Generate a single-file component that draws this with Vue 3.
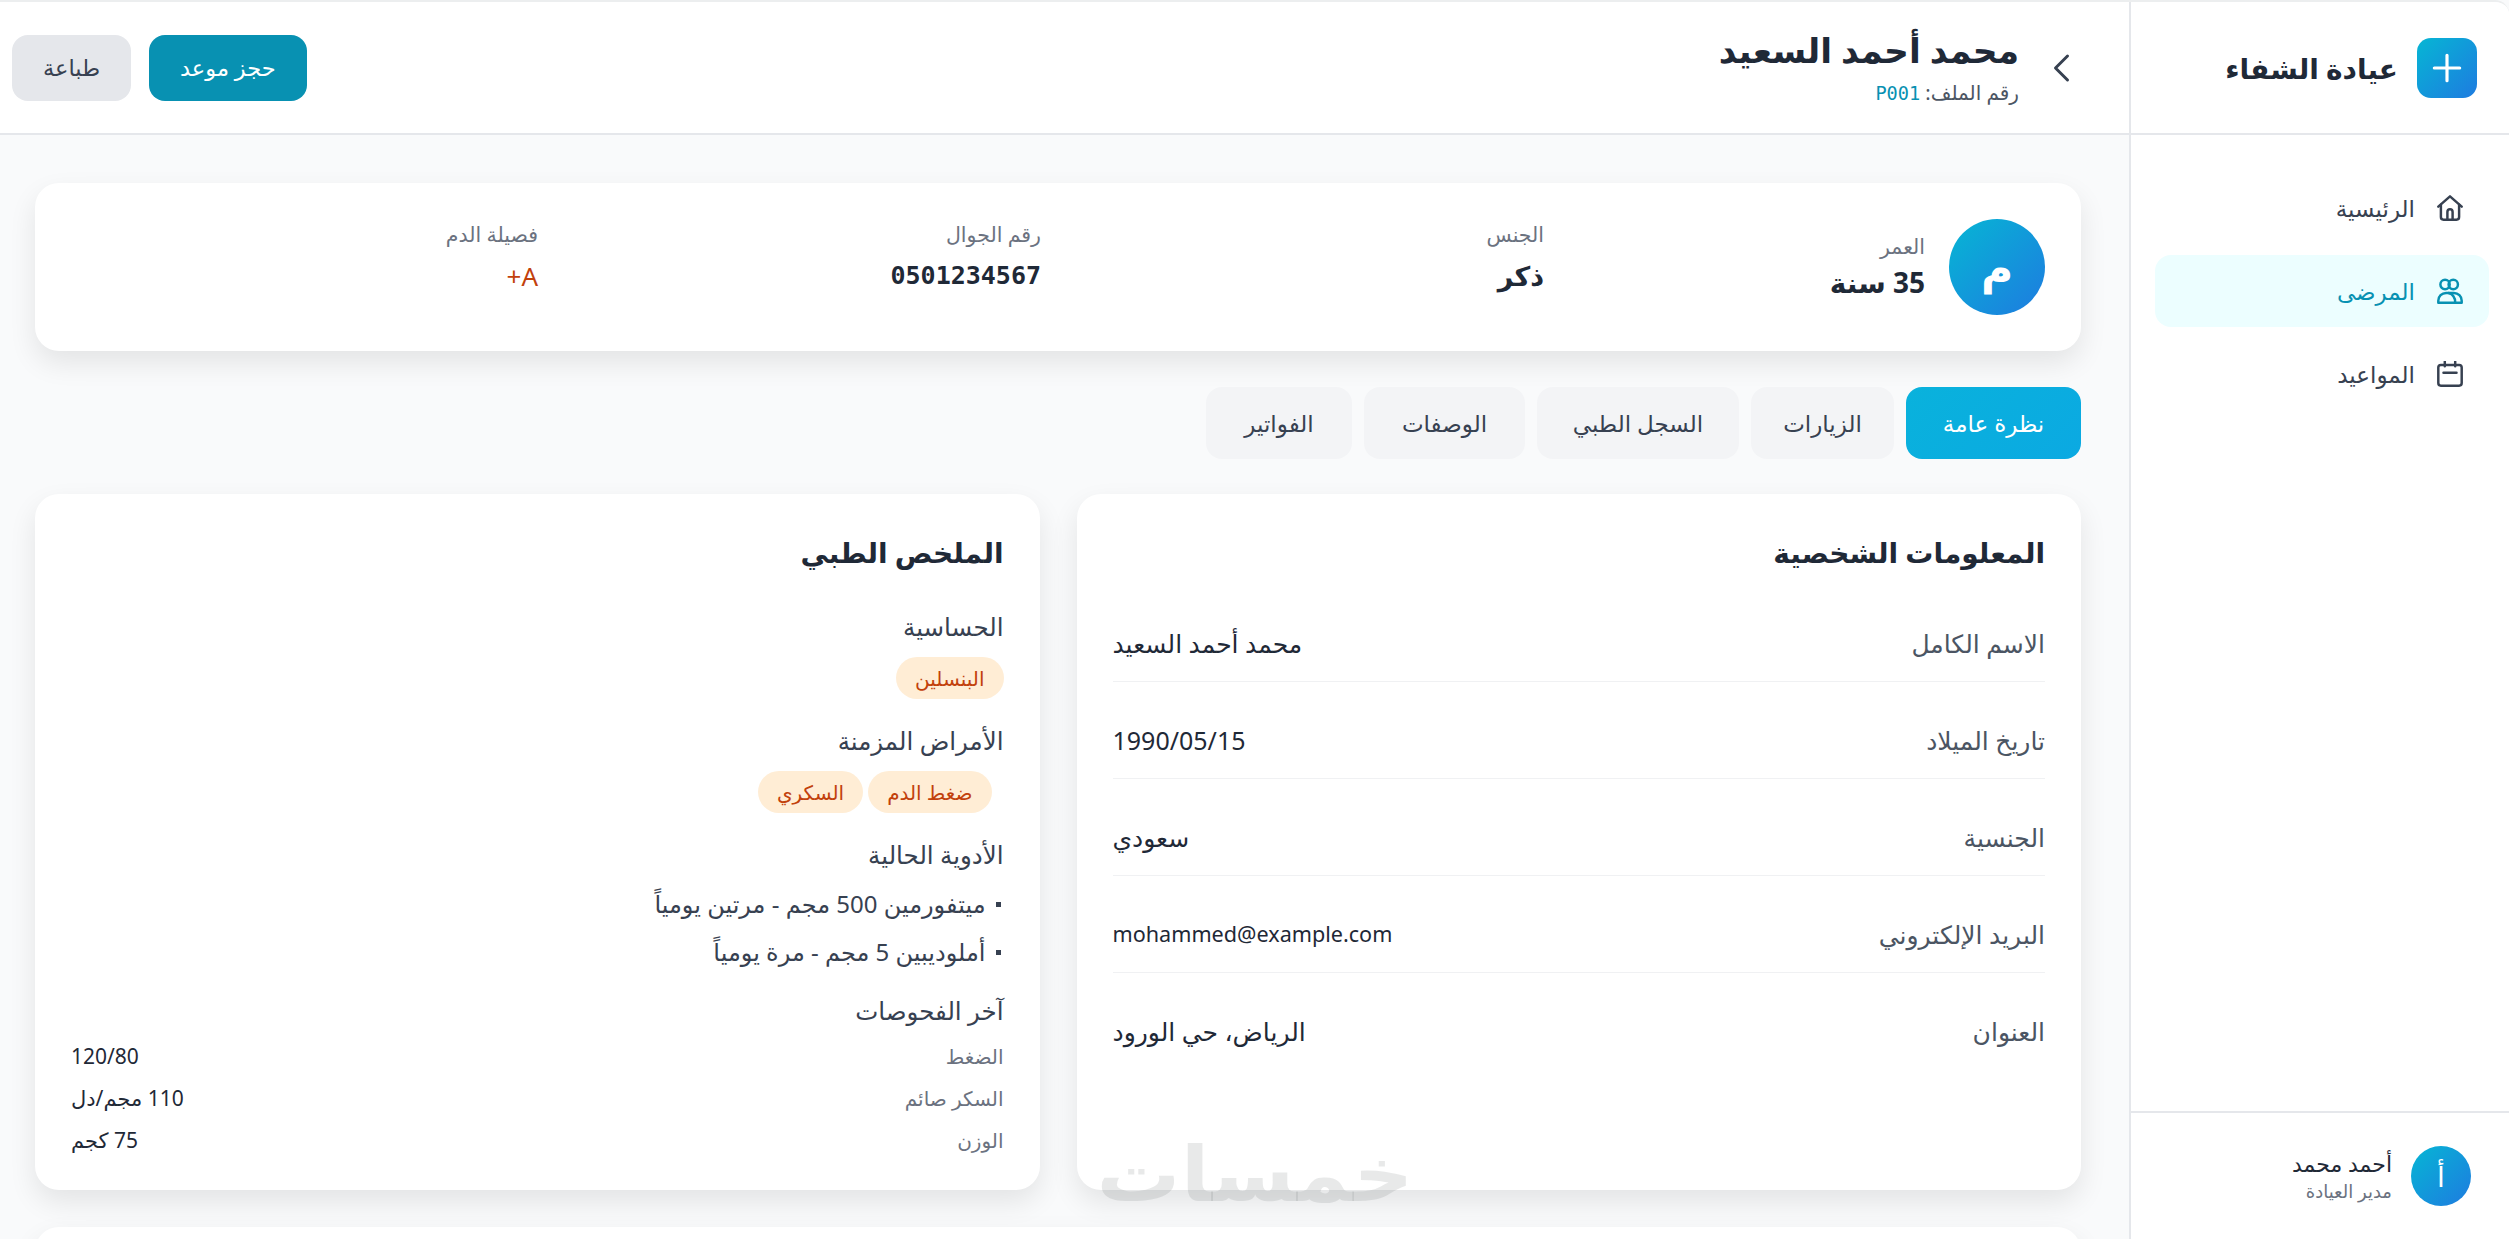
<template>
  <div class="app" dir="rtl">
    <!-- sidebar -->
    <aside class="sidebar">
      <div class="brand">
        <div class="brand-icon">
          <svg viewBox="0 0 24 24" width="38" height="38" fill="none" stroke="#fff" stroke-width="2" stroke-linecap="round">
            <path d="M12 4v16M4 12h16" />
          </svg>
        </div>
        <span class="brand-name">عيادة الشفاء</span>
      </div>
      <nav class="nav">
        <a v-for="item in navItems" :key="item.label" class="nav-item" :class="{ active: item.active }">
          <svg viewBox="2 2 20 20" width="26" height="26" fill="none" stroke="currentColor" stroke-width="1.9" stroke-linecap="round" stroke-linejoin="round">
            <path v-for="d in item.paths" :key="d" :d="d" />
          </svg>
          <span>{{ item.label }}</span>
        </a>
      </nav>
      <div class="user">
        <div class="user-avatar">أ</div>
        <div>
          <div class="user-name">أحمد محمد</div>
          <div class="user-role">مدير العيادة</div>
        </div>
      </div>
    </aside>

    <div class="content">
      <!-- header -->
      <header class="topbar">
        <div class="topbar-title">
          <svg class="back" viewBox="0 0 24 24" width="36" height="36" fill="none" stroke="#374151" stroke-width="2" stroke-linecap="round" stroke-linejoin="round">
            <path d="M15 4l-8 8 8 8" />
          </svg>
          <div>
            <h1>محمد أحمد السعيد</h1>
            <p>رقم الملف: <span class="file-no">P001</span></p>
          </div>
        </div>
        <div class="topbar-actions">
          <button class="btn primary">حجز موعد</button>
          <button class="btn">طباعة</button>
        </div>
      </header>

      <main class="page">
        <section class="card summary">
          <div class="summary-avatar">م</div>
          <div class="summary-grid">
            <div v-for="s in stats" :key="s.label" class="stat">
              <div class="stat-label">{{ s.label }}</div>
              <div class="stat-value" :class="s.cls">{{ s.value }}</div>
            </div>
          </div>
        </section>

        <div class="tabs">
          <button v-for="(t, i) in tabs" :key="t" class="tab" :class="{ active: i === 0 }">{{ t }}</button>
        </div>

        <div class="columns">
          <section class="card panel">
            <h2>المعلومات الشخصية</h2>
            <div v-for="row in personal" :key="row.label" class="info-row">
              <span class="info-label">{{ row.label }}</span>
              <span class="info-value" :class="row.cls">{{ row.value }}</span>
            </div>
          </section>

          <section class="card panel">
            <h2>الملخص الطبي</h2>
            <h3>الحساسية</h3>
            <div class="tags"><span class="tag">البنسلين</span></div>
            <h3>الأمراض المزمنة</h3>
            <div class="tags inset">
              <span class="tag">ضغط الدم</span>
              <span class="tag">السكري</span>
            </div>
            <h3>الأدوية الحالية</h3>
            <ul class="meds">
              <li>ميتفورمين 500 مجم - مرتين يومياً</li>
              <li>أملوديبين 5 مجم - مرة يومياً</li>
            </ul>
            <h3>آخر الفحوصات</h3>
            <div class="vitals">
              <div v-for="v in vitals" :key="v.label" class="vital">
                <span class="vital-label">{{ v.label }}</span>
                <span class="vital-value">{{ v.value }}</span>
              </div>
            </div>
          </section>
        </div>

        <section class="card next-card"></section>
      </main>
    </div>

    <div class="watermark">خمسات</div>
  </div>
</template>

<script setup>
const navItems = [
  {
    label: 'الرئيسية',
    paths: ['M3 11l9-8 9 8', 'M5 9.5V19a2 2 0 0 0 2 2h10a2 2 0 0 0 2-2V9.5', 'M10 21v-6a2 2 0 0 1 4 0v6'],
  },
  {
    label: 'المرضى',
    active: true,
    paths: [
      'M11.8 7a3.6 3.6 0 1 1-7.2 0a3.6 3.6 0 0 1 7.2 0z',
      'M18.1 7a3.6 3.6 0 1 1-7.2 0a3.6 3.6 0 0 1 7.2 0z',
      'M3 21v-1.5a6 6 0 0 1 6-6h6a6 6 0 0 1 6 6V21z',
      'M11 13.5c3 .8 5 3.5 5 7.5',
    ],
  },
  {
    label: 'المواعيد',
    paths: ['M5 5h14a2 2 0 0 1 2 2v12a2 2 0 0 1-2 2H5a2 2 0 0 1-2-2V7a2 2 0 0 1 2-2z', 'M8 2.5V6M16 2.5V6', 'M7 11h10'],
  },
]

const stats = [
  { label: 'العمر', value: '35 سنة', cls: 'age' },
  { label: 'الجنس', value: 'ذكر' },
  { label: 'رقم الجوال', value: '0501234567', cls: 'mono' },
  { label: 'فصيلة الدم', value: 'A+', cls: 'blood' },
]

const tabs = ['نظرة عامة', 'الزيارات', 'السجل الطبي', 'الوصفات', 'الفواتير']

const personal = [
  { label: 'الاسم الكامل', value: 'محمد أحمد السعيد' },
  { label: 'تاريخ الميلاد', value: '1990/05/15' },
  { label: 'الجنسية', value: 'سعودي' },
  { label: 'البريد الإلكتروني', value: 'mohammed@example.com', cls: 'latin' },
  { label: 'العنوان', value: 'الرياض، حي الورود' },
]

const vitals = [
  { label: 'الضغط', value: '120/80' },
  { label: 'السكر صائم', value: '110 مجم/دل' },
  { label: 'الوزن', value: '75 كجم' },
]
</script>

<style>
html,
body {
  margin: 0;
  background: #f9fafb;
  overflow: hidden;
}
</style>

<style scoped>
.app {
  display: flex;
  height: 1239px;
  overflow: hidden;
  position: relative;
  box-sizing: border-box;
  border-top: 2px solid #eceeef;
  border-top-right-radius: 14px;
  background: #f9fafb;
  color: #1f2937;
  font-family: 'Noto Sans', 'DejaVu Sans', sans-serif;
}

.sidebar {
  width: 380px;
  flex: none;
  box-sizing: border-box;
  display: flex;
  flex-direction: column;
  background: #fff;
  border-left: 2px solid #e5e7eb;
}

.brand {
  height: 133px;
  flex: none;
  box-sizing: border-box;
  display: flex;
  align-items: center;
  gap: 19px;
  padding: 0 32px;
  border-bottom: 2px solid #e5e7eb;
}

.brand-icon {
  width: 60px;
  height: 60px;
  border-radius: 14px;
  display: flex;
  align-items: center;
  justify-content: center;
  background: linear-gradient(135deg, #06b6d4, #1e7be0);
}

.brand-name {
  font-size: 28px;
  font-weight: 700;
}

.nav {
  flex: 1;
  display: flex;
  flex-direction: column;
  gap: 11px;
  padding: 37px 20px 0 24px;
}

.nav-item {
  height: 72px;
  display: flex;
  align-items: center;
  gap: 22px;
  padding: 0 26px;
  border-radius: 16px;
  font-size: 23px;
  color: #374151;
}

.nav-item.active {
  background: #ecfeff;
  color: #0891b2;
}

.user {
  flex: none;
  height: 128px;
  box-sizing: border-box;
  display: flex;
  align-items: center;
  gap: 19px;
  padding: 0 38px;
  border-top: 2px solid #e5e7eb;
}

.user-avatar {
  width: 60px;
  height: 60px;
  border-radius: 50%;
  color: #fff;
  font-size: 28px;
  display: flex;
  align-items: center;
  justify-content: center;
  background: linear-gradient(135deg, #06b6d4, #1e7be0);
}

.user-name {
  font-size: 22px;
  line-height: 30px;
}

.user-role {
  font-size: 18px;
  line-height: 26px;
  color: #6b7280;
}

.content {
  flex: 1;
  min-width: 0;
  display: flex;
  flex-direction: column;
}

.topbar {
  height: 133px;
  flex: none;
  box-sizing: border-box;
  display: flex;
  align-items: center;
  justify-content: space-between;
  padding: 0 12px;
  background: #fff;
  border-bottom: 2px solid #e5e7eb;
}

.topbar-title {
  display: flex;
  align-items: center;
  gap: 26px;
  padding-right: 36px;
}

.topbar-title h1 {
  margin: 0;
  font-size: 34.5px;
  line-height: 52px;
  font-weight: 700;
}

.topbar-title p {
  margin: 0;
  font-size: 20px;
  line-height: 34px;
  color: #4b5563;
}

.file-no {
  font-family: 'DejaVu Sans Mono', monospace;
  font-size: 18.6px;
  color: #0891b2;
}

.topbar-actions {
  display: flex;
  gap: 18px;
}

.btn {
  height: 66px;
  padding: 0 31px;
  border: 0;
  border-radius: 16px;
  background: #e5e7eb;
  color: #374151;
  font-family: inherit;
  font-size: 22.5px;
}

.btn.primary {
  background: #0891b2;
  color: #fff;
}

.page {
  padding: 48px 48px 0 35px;
}

.card {
  background: #fff;
  border-radius: 24px;
  box-shadow: 0 12px 28px rgba(0, 0, 0, 0.09);
}

.summary {
  height: 168px;
  display: flex;
  align-items: center;
  gap: 24px;
  padding: 0 36px;
}

.summary-avatar {
  width: 96px;
  height: 96px;
  flex: none;
  border-radius: 50%;
  color: #fff;
  font-size: 44px;
  font-weight: 700;
  display: flex;
  align-items: center;
  justify-content: center;
  background: linear-gradient(135deg, #06b6d4, #1e7be0);
}

.summary-grid {
  flex: 1;
  height: 96px;
  display: grid;
  grid-template-columns: 381px 503px 503px 1fr;
}

.stat:first-child {
  align-self: center;
}

.stat-label {
  font-size: 20.5px;
  line-height: 30px;
  color: #6b7280;
}

.stat:not(:first-child) .stat-label {
  margin-bottom: 6px;
}

.stat-value {
  font-size: 27px;
  line-height: 42px;
  font-weight: 700;
}

.stat-value.age {
  font-size: 28px;
}

.stat-value.mono {
  font-family: 'DejaVu Sans Mono', monospace;
  font-size: 25px;
}

.stat-value.blood {
  color: #c2410c;
  font-weight: 400;
  font-size: 26px;
}

.tabs {
  display: flex;
  gap: 12px;
  margin-top: 36px;
}

.tab {
  height: 72px;
  padding: 0;
  border: 0;
  border-radius: 16px;
  background: #f3f4f6;
  color: #374151;
  font-family: inherit;
  font-size: 23px;
}

/* widths follow the label widths of the reference font */
.tab:nth-child(1) { width: 175px; }
.tab:nth-child(2) { width: 143px; }
.tab:nth-child(3) { width: 202px; }
.tab:nth-child(4) { width: 161px; }
.tab:nth-child(5) { width: 146px; }

.tab.active {
  color: #fff;
  background: linear-gradient(135deg, #09b2dc, #0ba9e2);
}

.columns {
  display: grid;
  grid-template-columns: 1fr 1fr;
  gap: 37px;
  margin-top: 35px;
}

.panel {
  height: 696px;
  box-sizing: border-box;
  padding: 36px;
}

.panel h2 {
  margin: 0 0 30px;
  font-size: 28px;
  line-height: 44px;
  font-weight: 700;
}

.info-row {
  height: 78px;
  margin-bottom: 19px;
  box-sizing: border-box;
  display: flex;
  align-items: center;
  justify-content: space-between;
  border-bottom: 1px solid #f0f1f3;
  font-size: 25px;
}

.info-row:last-child {
  border-bottom: 0;
}

.info-label {
  color: #4b5563;
}

.info-value.latin {
  font-size: 21.6px;
}

.panel h3 {
  margin: 0 0 7px;
  font-size: 24.5px;
  line-height: 46px;
  font-weight: 400;
  color: #374151;
}

.tags {
  display: flex;
  gap: 5px;
  margin-bottom: 19px;
}

.tags.inset {
  padding-right: 12px;
}

.tag {
  height: 42px;
  display: flex;
  align-items: center;
  padding: 0 19px;
  border-radius: 21px;
  background: #ffedd5;
  color: #c2410c;
  font-size: 20px;
}

.meds {
  list-style: none;
  margin: -5px 0 12px;
  padding: 0;
  font-size: 24px;
  color: #374151;
}

.meds li {
  position: relative;
  height: 48px;
  line-height: 48px;
  padding-right: 18px;
}

.meds li::before {
  content: '';
  position: absolute;
  right: 3px;
  top: 22px;
  width: 5px;
  height: 5px;
  background: #374151;
}

.vitals {
  margin-top: -6px;
}

.vital {
  height: 42px;
  display: flex;
  align-items: center;
  justify-content: space-between;
  font-size: 20px;
}

.vital-label {
  color: #6b7280;
}

.vital-value {
  font-size: 21px;
}

.next-card {
  height: 200px;
  margin-top: 37px;
}

/* watermark sits above everything, bottom middle */
.watermark {
  position: absolute;
  left: 1100px;
  top: 1120px;
  width: 310px;
  text-align: center;
  font-size: 76px;
  line-height: 100px;
  font-weight: 700;
  color: rgba(90, 100, 100, 0.14);
  transform: scaleX(1.1);
  pointer-events: none;
}
</style>
